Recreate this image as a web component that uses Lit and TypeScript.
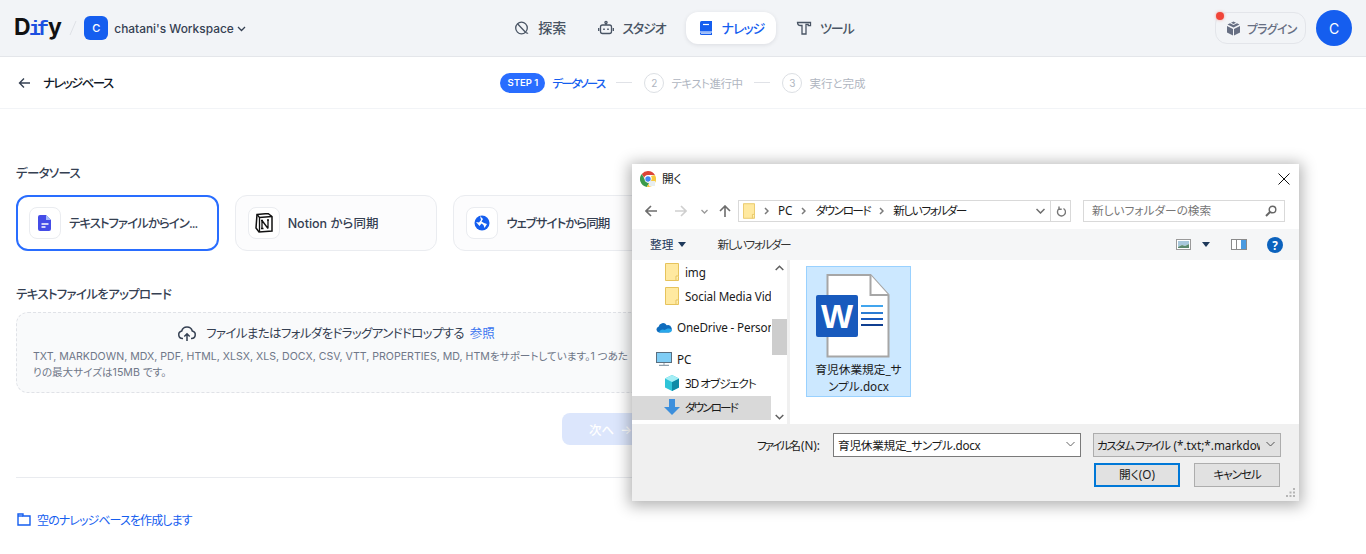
import { LitElement, html, css, svg } from 'lit';
import { customElement } from 'lit/decorators.js';

const folderIcon = (w = 14, h = 18) => html`<svg width=${w} height=${h} viewBox="0 0 14 18">
  <path d="M.5.5h13v17H.5z" fill="#ffe9a0" stroke="#e6c35c"/>
  <path d="M11 17.5V13h2.5" fill="#fff3c4" stroke="#e6c35c"/>
</svg>`;

const chev = svg`<path d="M1 1l3 3-3 3" fill="none" stroke="#7a7a7a" stroke-width="1.5"/>`;

@customElement('file-dialog')
export class FileDialog extends LitElement {
    static styles = css`
        :host {
            display: block;
            position: absolute;
            left: 632px;
            top: 164px;
            width: 667px;
            height: 337px;
            background: #fff;
            box-shadow: 0 2px 14px 3px rgba(0, 0, 0, .3);
            font: 11.7px "Noto Sans", "Noto Sans CJK JP", sans-serif;
            font-feature-settings: "palt";
            color: #1a1a1a;
            display: grid;
            grid-template-rows: 29px 36px 31px 164px 77px;
            overflow: hidden;
        }
        svg { display: block; flex: none; }
        .title { display: flex; align-items: center; padding: 0 9px 0 8px; gap: 6px; }
        .title span { padding-bottom: 3px; }
        .title .x { margin-left: auto; margin-right: 0; }
        .nav { display: flex; align-items: center; padding-left: 13px; }
        .address {
            margin-left: 7px;
            width: 333px;
            height: 22px;
            box-sizing: border-box;
            border: 1px solid #d9d9d9;
            display: flex;
            align-items: center;
            padding-left: 4px;
        }
        .address .crumb { margin-left: 9px; white-space: nowrap; padding-bottom: 3px; letter-spacing: -1.5px; }
        .address .crumb.pc { letter-spacing: 0; }
        .address svg.sep { margin-left: 9px; }
        .address .end {
            margin-left: auto;
            display: flex;
            align-items: center;
            height: 100%;
        }
        .address .drop { width: 19px; display: flex; justify-content: center; }
        .address .refresh {
            width: 19px;
            height: 100%;
            border-left: 1px solid #d9d9d9;
            display: flex;
            align-items: center;
            justify-content: center;
        }
        .search {
            margin-left: 12px;
            width: 202px;
            height: 22px;
            box-sizing: border-box;
            border: 1px solid #d9d9d9;
            display: flex;
            align-items: center;
            justify-content: space-between;
            padding: 0 7px 0 8px;
            color: #777;
        }
        .search span { padding-bottom: 3px; }
        .toolbar {
            background: #f5f6f7;
            display: flex;
            align-items: center;
            padding-left: 18px;
            padding-right: 16px;
            color: #1e395b;
        }
        .toolbar .org { padding-bottom: 3px; }
        .toolbar .newf { margin-left: 31px; color: #333; padding-bottom: 3px; letter-spacing: -1.5px; }
        .caret {
            width: 0;
            height: 0;
            border: 4px solid transparent;
            border-top: 5px solid #1e395b;
            border-bottom: 0;
            margin-left: 5px;
        }
        .toolbar .right { margin-left: auto; display: flex; align-items: center; }
        .help { margin-left: -16px; width: 16px; text-align: center; color: #fff; font-weight: 700; line-height: 16px; }
        .body { display: flex; }
        .tree { width: 139px; overflow: hidden; }
        .row { height: 24px; box-sizing: border-box; display: flex; align-items: center; white-space: nowrap; gap: 6px; overflow: hidden; letter-spacing: -.15px; }
        .row.l1 { padding-left: 33px; }
        .row.l2 { padding-left: 32px; gap: 5px; }
        .row.l0 { padding-left: 24px; gap: 5px; margin-top: 8px; padding-bottom: 2px; }
        .row.plain { margin-top: 0; padding-bottom: 3px; padding-left: 32px; }
        .row.sel { background: #d9d9d9; padding-bottom: 3px; }
        .row .kana { letter-spacing: -1px; }
        .row.sel .kana { letter-spacing: -2px; }
        .scroll {
            width: 15px;
            margin-left: 1px;
            display: grid;
            grid-template-rows: 15px 44px 36px 1fr 15px;
            justify-items: center;
            align-items: center;
            border-right: 3px solid #f0f0f0;
            box-sizing: content-box;
        }
        .thumb { background: #cdcdcd; width: 100%; height: 100%; grid-row: 3; }
        .files { padding: 6px 0 0 16px; }
        .tile {
            width: 105px;
            height: 131px;
            box-sizing: border-box;
            background: #cce8ff;
            border: 1px solid #99d1ff;
            display: flex;
            flex-direction: column;
            align-items: center;
            padding-top: 7px;
        }
        .tile svg { margin-right: 12px; }
        .tile .name { margin-top: 3px; text-align: center; line-height: 17px; }
        .word-letter { font: 700 34px "Liberation Sans", sans-serif; fill: #fff; }
        .bottom {
            background: #f0f0f0;
            display: grid;
            grid-template-columns: 1fr 248px 188px;
            grid-template-rows: 24px 24px;
            column-gap: 12px;
            row-gap: 6px;
            padding: 9px 18px 0 0;
            align-items: center;
            position: relative;
        }
        .bottom label { justify-self: end; margin-right: 1px; padding-bottom: 2px; }
        .bottom label span { letter-spacing: -2px; margin-right: 2px; }
        .input {
            height: 24px;
            box-sizing: border-box;
            background: #fff;
            border: 1px solid #7a7a7a;
            display: flex;
            align-items: center;
            justify-content: space-between;
            padding: 0 5px 2px 4px;
            white-space: nowrap;
            letter-spacing: -.3px;
        }
        .select {
            height: 24px;
            box-sizing: border-box;
            background: #e1e1e1;
            border: 1px solid #adadad;
            display: flex;
            align-items: center;
            justify-content: space-between;
            padding: 0 5px 2px 3px;
            overflow: hidden;
            white-space: nowrap;
        }
        .select .val { width: 163px; overflow: hidden; }
        .select .val span { letter-spacing: -1.5px; margin-right: 4px; }
        .buttons {
            grid-column: 2 / 4;
            display: flex;
            justify-content: flex-end;
            gap: 14px;
            padding-right: 1px;
        }
        .btn {
            width: 86px;
            height: 24px;
            box-sizing: border-box;
            background: #e1e1e1;
            border: 1px solid #adadad;
            display: flex;
            align-items: center;
            justify-content: center;
            padding-bottom: 3px;
        }
        .btn.kana { letter-spacing: -1.2px; }
        .btn.primary { border: 2px solid #0078d7; }
        .grip { position: absolute; right: 3px; bottom: 3px; }
    `;

    chromeIcon() {
        return html`<svg width="16" height="16" viewBox="0 0 16 16">
          <path d="M8 0a8 8 0 0 1 6.93 4H8a4 4 0 0 0-3.8 2.8L1.8 2.9A8 8 0 0 1 8 0z" fill="#db4437"/>
          <path d="M1.8 2.9l3.4 6.1A4 4 0 0 0 9.2 11.8L6.8 15.9A8 8 0 0 1 1.8 2.9z" fill="#3a9a4c"/>
          <path d="M14.93 4A8 8 0 0 1 6.8 15.9l3.5-6A4 4 0 0 0 11 5z" fill="#f7c93e"/>
          <circle cx="8" cy="8" r="3.4" fill="#fff"/>
          <circle cx="8" cy="8" r="2.7" fill="#4285f4"/>
          <path d="M9 10h6v5H9z" fill="#e8eef0"/>
        </svg>`;
    }

    wordIcon() {
        return html`<svg width="74" height="84" viewBox="0 0 74 84">
          <path d="M11.5 1h43l18 20v61.500h-61z" fill="#fff" stroke="#a6a6a6" stroke-width="2"/>
          <path d="M54.500 1v20h18" fill="#fff" stroke="#a6a6a6" stroke-width="2"/>
          <rect x="0" y="21" width="42" height="42" rx="2" fill="#185abd"/>
          <text class="word-letter" x="21" y="54" text-anchor="middle">W</text>
          <path d="M45 32h22" stroke="#41a5ee" stroke-width="2"/>
          <path d="M45 39h22" stroke="#2b7cd3" stroke-width="2"/>
          <path d="M45 45h22" stroke="#185abd" stroke-width="2"/>
          <path d="M45 51h22" stroke="#103f91" stroke-width="2"/>
        </svg>`;
    }

    render() {
        return html`
          <div class="title">
            ${this.chromeIcon()}
            <span>開く</span>
            <svg class="x" width="12" height="12" viewBox="0 0 12 12"><path d="M.5.5l11 11M11.500.5l-11 11" stroke="#111" fill="none"/></svg>
          </div>
          <div class="nav">
            <svg width="12" height="12" viewBox="0 0 12 12"><path d="M12 6H1.500M6 1L1 6l5 5" fill="none" stroke="#6d6d6d" stroke-width="1.600"/></svg>
            <svg style="margin-left:18px" width="12" height="12" viewBox="0 0 12 12"><path d="M0 6h10.500M6 1l5 5-5 5" fill="none" stroke="#cfcfcf" stroke-width="1.600"/></svg>
            <svg style="margin-left:14px" width="7" height="5" viewBox="0 0 7 5"><path d="M.5 1l3 3 3-3" fill="none" stroke="#999" stroke-width="1.300"/></svg>
            <svg style="margin-left:11px" width="12" height="12" viewBox="0 0 12 12"><path d="M6 12V1.500M1 6l5-5 5 5" fill="none" stroke="#6d6d6d" stroke-width="1.600"/></svg>
            <div class="address">
              ${folderIcon(12, 16)}
              <svg class="sep" width="5" height="8" viewBox="0 0 5 8">${chev}</svg>
              <span class="crumb pc">PC</span>
              <svg class="sep" width="5" height="8" viewBox="0 0 5 8">${chev}</svg>
              <span class="crumb">ダウンロード</span>
              <svg class="sep" width="5" height="8" viewBox="0 0 5 8">${chev}</svg>
              <span class="crumb">新しいフォルダー</span>
              <div class="end">
                <div class="drop"><svg width="9" height="6" viewBox="0 0 9 6"><path d="M.5 1l4 4 4-4" fill="none" stroke="#6d6d6d" stroke-width="1.500"/></svg></div>
                <div class="refresh"><svg width="10" height="11" viewBox="0 0 10 11"><path d="M2.500 2.500A4 4 0 1 0 7 2.800M7 .5v2.800H4.300" fill="none" stroke="#777" stroke-width="1.400" transform="scale(-1 1) translate(-10 0)"/></svg></div>
              </div>
            </div>
            <div class="search">
              <span>新しいフォルダーの検索</span>
              <svg width="12" height="12" viewBox="0 0 12 12"><circle cx="7.500" cy="4.500" r="3.300" fill="none" stroke="#666" stroke-width="1.400"/><path d="M5 7l-4 4" stroke="#666" stroke-width="2"/></svg>
            </div>
          </div>
          <div class="toolbar">
            <span class="org">整理</span><i class="caret"></i>
            <span class="newf">新しいフォルダー</span>
            <div class="right">
              <svg width="15" height="11" viewBox="0 0 15 11"><rect x=".5" y=".5" width="14" height="10" fill="#fff" stroke="#9a9a9a"/><path d="M2 2h11v3l-4 2-3-1-4 2z" fill="#a8c8dc"/><path d="M2 8l4-2 3 1 4-2v4H2z" fill="#5c8a6e"/></svg>
              <i class="caret" style="margin-left:11px"></i>
              <svg style="margin-left:21px" width="16" height="11" viewBox="0 0 16 11"><rect x=".5" y=".5" width="15" height="10" fill="#fff" stroke="#8a8a8a"/><rect x="10" y="1" width="5" height="9" fill="#4a9ae0"/><path d="M5.500 1v9" stroke="#8a8a8a"/></svg>
              <svg style="margin-left:20px" width="16" height="16" viewBox="0 0 16 16"><circle cx="8" cy="8" r="8" fill="#0b62bd"/></svg>
              <span class="help">?</span>
            </div>
          </div>
          <div class="body">
            <div class="tree">
              <div class="row l1">${folderIcon()}<span>img</span></div>
              <div class="row l1">${folderIcon()}<span>Social Media Vid</span></div>
              <div class="row l0">
                <svg width="16" height="11" viewBox="0 0 16 11"><path d="M3 10.500a3 3 0 0 1-.5-5.800 4.500 4.500 0 0 1 8.200-1.500A3.500 3.500 0 0 1 13 10.500z" fill="#0f6cbd"/><path d="M3 10.500h10a3 3 0 0 0 3-2.500c-2-2-5-2-7 0-2-1-5-1-6 2.500z" fill="#28a8ea"/></svg>
                <span>OneDrive - Person</span>
              </div>
              <div class="row l0">
                <svg width="16" height="14" viewBox="0 0 16 14"><rect x=".5" y=".5" width="15" height="10" fill="#7fcdf5" stroke="#5a6f80"/><path d="M3 13.500h10" stroke="#8fa0ad" stroke-width="1.500"/><path d="M8 11v2" stroke="#8fa0ad"/></svg>
                <span>PC</span>
              </div>
              <div class="row l0 plain">
                <svg width="16" height="16" viewBox="0 0 16 16"><path d="M8 0l7 3.500v9L8 16l-7-3.500v-9z" fill="#2fc4d8"/><path d="M8 7l7-3.500v9L8 16z" fill="#0e8aa6"/><path d="M8 0l7 3.500L8 7 1 3.500z" fill="#a5eef5"/></svg>
                <span class="kana">3D オブジェクト</span>
              </div>
              <div class="row l2 sel">
                <svg width="16" height="16" viewBox="0 0 16 16"><path d="M5 0h6v8h5l-8 8-8-8h5z" fill="#3d8fdc"/></svg>
                <span class="kana">ダウンロード</span>
              </div>
            </div>
            <div class="scroll">
              <svg width="9" height="6" viewBox="0 0 9 6"><path d="M.7 5l3.800-3.800L8.300 5" fill="none" stroke="#606060" stroke-width="1.500"/></svg>
              <div class="thumb"></div>
              <svg style="grid-row:5" width="9" height="6" viewBox="0 0 9 6"><path d="M.7 1l3.800 3.800L8.300 1" fill="none" stroke="#606060" stroke-width="1.500"/></svg>
            </div>
            <div class="files">
              <div class="tile">
                ${this.wordIcon()}
                <div class="name">育児休業規定_サ<br>ンプル.docx</div>
              </div>
            </div>
          </div>
          <div class="bottom">
            <label><span>ファイル名</span>(N):</label>
            <div class="input"><span>育児休業規定_サンプル.docx</span>
              <svg width="9" height="6" viewBox="0 0 9 6"><path d="M.5 1l4 4 4-4" fill="none" stroke="#666"/></svg></div>
            <div class="select"><div class="val"><span>カスタム ファイル</span>(*.txt;*.markdown;*.mdx)</div>
              <svg width="9" height="6" viewBox="0 0 9 6"><path d="M.5 1l4 4 4-4" fill="none" stroke="#555"/></svg></div>
            <div></div>
            <div class="buttons">
              <div class="btn primary">開く(O)</div>
              <div class="btn kana">キャンセル</div>
            </div>
            <svg class="grip" width="10" height="10" viewBox="0 0 10 10" fill="#b5b5b5">
              <rect x="7" y="0" width="2" height="2"/><rect x="3.500" y="3.500" width="2" height="2"/><rect x="7" y="3.500" width="2" height="2"/>
              <rect x="0" y="7" width="2" height="2"/><rect x="3.500" y="7" width="2" height="2"/><rect x="7" y="7" width="2" height="2"/>
            </svg>
          </div>
        `;
    }
}

@customElement('app-root')
export class AppRoot extends LitElement {
    static styles = css`
        :host {
            display: block;
            position: relative;
            height: 554px;
            overflow: hidden;
            background: #fff;
            font-family: Inter, "Noto Sans CJK JP", sans-serif;
            font-feature-settings: "palt";
            color: #354052;
        }
        svg { display: block; flex: none; }
        header {
            height: 56px;
            box-sizing: content-box;
            background: #f2f4f7;
            border-bottom: 1px solid #e4e6ea;
            display: grid;
            grid-template-columns: 1fr auto 1fr;
            align-items: center;
            padding: 0 14px;
        }
        .left { display: flex; align-items: center; }
        .logo {
            font: 700 23px/1 Inter, sans-serif;
            color: #111;
            letter-spacing: -.6px;
            display: flex;
            align-items: baseline;
        }
        .logo b {
            font: 700 20px/1 "Liberation Mono", monospace;
            color: #1c4fe0;
            letter-spacing: -4px;
            margin: 0 3px 0 -1px;
        }
        .slash { margin: 0 7px 0 8px; }
        .ws-badge {
            flex: none;
            width: 24px;
            height: 24px;
            border-radius: 6px;
            background: #155eef;
            color: #fff;
            font-size: 11px;
            font-weight: 500;
            display: flex;
            align-items: center;
            justify-content: center;
        }
        .ws-name { margin-left: 6px; font-size: 11.900px; font-weight: 500; white-space: nowrap; }
        .nav { display: flex; gap: 8px; padding-left: 2px; }
        .nav-item {
            height: 32px;
            padding: 0 12px 2px;
            box-sizing: border-box;
            display: flex;
            align-items: center;
            gap: 8px;
            border-radius: 12px;
            font-size: 14px;
            font-weight: 500;
            color: #495464;
            white-space: nowrap;
        }
        .nav-item svg { margin-top: 2px; }
        .nav-item .kana { font-size: 13px; letter-spacing: -1.100px; }
        .nav-item.active {
            background: #fff;
            color: #155eef;
            box-shadow: 0 1px 4px rgba(16, 24, 40, .1);
        }
        .right { display: flex; justify-content: flex-end; align-items: center; gap: 10px; }
        .plugin {
            position: relative;
            width: 91px;
            height: 32px;
            box-sizing: border-box;
            border: 1px solid #e3e5ea;
            border-radius: 12px;
            display: flex;
            align-items: center;
            gap: 6px;
            padding-left: 10px;
            font-size: 12px;
            font-weight: 500;
            color: #676f83;
            white-space: nowrap;
            letter-spacing: -.8px;
        }
        .dot {
            position: absolute;
            left: 0;
            top: -1px;
            width: 8px;
            height: 8px;
            border-radius: 50%;
            background: #f04438;
            box-shadow: 0 0 3px rgba(240, 68, 56, .5);
        }
        .avatar {
            flex: none;
            width: 36px;
            height: 36px;
            border-radius: 50%;
            background: #155eef;
            color: #fff;
            font-size: 14px;
            display: flex;
            align-items: center;
            justify-content: center;
        }
        .stepbar {
            height: 51px;
            border-bottom: 1px solid #f2f4f7;
            display: grid;
            grid-template-columns: 1fr auto 1fr;
            align-items: center;
            padding: 0 18px;
        }
        .back { display: flex; align-items: center; gap: 13px; font-size: 12.500px; font-weight: 500; color: #101828; white-space: nowrap; letter-spacing: -1.600px; }
        .steps { display: flex; align-items: center; font-size: 11.500px; color: #b0b6c1; white-space: nowrap; }
        .pill {
            height: 20px;
            width: 45px;
            border-radius: 10px;
            background: #296dff;
            color: #fff;
            font-size: 9.500px;
            font-weight: 600;
            display: flex;
            align-items: center;
            justify-content: center;
            margin-right: 7px;
        }
        .steps .cur { color: #155eef; font-weight: 500; letter-spacing: -1.800px; }
        .steps .txt { letter-spacing: -.5px; }
        .line { width: 16px; height: 1px; background: #e0e2e7; margin: 0 12px; }
        .num {
            width: 18px;
            height: 18px;
            border: 1px solid #dcdfe4;
            border-radius: 50%;
            font-size: 10px;
            display: flex;
            align-items: center;
            justify-content: center;
            margin-right: 7px;
        }
        main { width: 640px; padding: 55px 0 0 16px; }
        .label { font-size: 12.500px; font-weight: 500; height: 20px; line-height: 20px; color: #354052; white-space: nowrap; letter-spacing: -.7px; }
        .cards { display: flex; gap: 16px; margin-top: 11px; width: 640px; }
        .card {
            flex: none;
            width: 202.670px;
            height: 56px;
            box-sizing: border-box;
            border: 1px solid #eaecf0;
            border-radius: 12px;
            background: #fcfcfd;
            display: flex;
            align-items: center;
            gap: 8px;
            padding: 0 0 2px 12px;
            font-size: 12.500px;
            font-weight: 500;
            color: #354052;
            white-space: nowrap;
        }
        .card .ico { margin-top: 2px; }
        .card.on { border: 2px solid #296dff; background: #fff; padding-left: 11px; }
        .card .kana { letter-spacing: -1px; }
        .ico {
            flex: none;
            width: 32px;
            height: 32px;
            box-sizing: border-box;
            border: 1px solid #eaecf0;
            border-radius: 8px;
            background: #fff;
            display: flex;
            align-items: center;
            justify-content: center;
        }
        .mt { margin-top: 34px; }
        .upload {
            margin-top: 7px;
            width: 640px;
            height: 81px;
            box-sizing: border-box;
            border: 1px dashed #e0e2e7;
            border-radius: 12px;
            background: #f9fafb;
            padding: 8px 16px 0;
        }
        .drop {
            display: flex;
            align-items: center;
            justify-content: center;
            gap: 9px;
            font-size: 12.500px;
            color: #354052;
            height: 24px;
            white-space: nowrap;
        }
        .drop span { letter-spacing: -.65px; padding-bottom: 2px; }
        .drop a { color: #155eef; opacity: .85; letter-spacing: 0; margin-left: 3px; }
        .hint { font-size: 10.600px; line-height: 16px; margin-top: 4px; color: #6f7788; white-space: nowrap; }
        .next-wrap { display: flex; justify-content: flex-end; margin-top: 20px; }
        .next {
            width: 94px;
            height: 32px;
            border-radius: 8px;
            background: #dce6fc;
            color: #fff;
            font-size: 12.500px;
            font-weight: 500;
            display: flex;
            align-items: center;
            gap: 6px;
            padding-left: 27px;
            box-sizing: border-box;
        }
        .rule { height: 1px; background: #e9ebef; margin-top: 32px; }
        .link {
            margin-top: 33px;
            display: flex;
            align-items: center;
            gap: 6px;
            padding-left: 1px;
            font-size: 12px;
            color: #155eef;
            white-space: nowrap;
            letter-spacing: -.9px;
        }
    `;

    render() {
        return html`
          <header>
            <div class="left">
              <div class="logo">D<b>if</b>y</div>
              <svg class="slash" width="8" height="14" viewBox="0 0 8 14"><path d="M7 0L1 14" stroke="#dfe1e6"/></svg>
              <div class="ws-badge">C</div>
              <div class="ws-name">chatani's Workspace</div>
              <svg style="margin-left:3px;margin-top:1px" width="9" height="6" viewBox="0 0 9 6"><path d="M1 1l3.500 3.500L8 1" fill="none" stroke="#354052" stroke-width="1.300"/></svg>
            </div>
            <nav class="nav">
              <div class="nav-item">
                <svg width="16" height="16" viewBox="2 2 16 16" fill="none" stroke="#495464" stroke-width="1.300"><circle cx="9.500" cy="10" r="5.800"/><path d="M5.500 5.800l8 8.400M13.500 14.200c1 .8 2 1.200 2.500.8"/></svg>
                <span>探索</span>
              </div>
              <div class="nav-item">
                <svg width="16" height="16" viewBox="2 2 16 16" fill="none" stroke="#495464" stroke-width="1.300"><rect x="4.500" y="7" width="11" height="8.500" rx="2"/><circle cx="10" cy="4.500" r="1.100"/><path d="M10 5.500V7M2.700 10v3M17.300 10v3"/><path d="M8 10.500v1.500M12 10.500v1.500" stroke-width="1.600"/></svg>
                <span class="kana">スタジオ</span>
              </div>
              <div class="nav-item active">
                <svg width="16" height="16" viewBox="0 0 16 16"><path d="M2 2.500A1.500 1.500 0 0 1 3.500 1H14v10.500H2z" fill="#155eef"/><path d="M2 12.500h12V15H3.500A1.500 1.500 0 0 1 2 13.500z" fill="#155eef"/><path d="M5 4.500h6" stroke="#fff" stroke-width="1.200"/><path d="M3 13.300h10" stroke="#fff" stroke-width=".8"/></svg>
                <span class="kana">ナレッジ</span>
              </div>
              <div class="nav-item">
                <svg width="16" height="16" viewBox="2 2 16 16" fill="none" stroke="#495464" stroke-width="1.300"><path d="M3.500 4.500h13v3.200h-2.300V6.300H12V16H8V7.500H6.500c-1.500 0-3-1-3-3z"/></svg>
                <span class="kana">ツール</span>
              </div>
            </nav>
            <div class="right">
              <div class="plugin">
                <i class="dot"></i>
                <svg width="15" height="15" viewBox="0 0 15 15" fill="#676f83"><path d="M7.500.5l2.500 1.200L7.500 3 5 1.700zM1.500 3.500L4 2.300l3.500 1.700L11 2.300l2.500 1.200-6 3z"/><path d="M1 5l6 3v6.500L1 11.500zM14 5l-6 3v6.500l6-3z"/></svg>
                プラグイン
              </div>
              <div class="avatar">C</div>
            </div>
          </header>
          <div class="stepbar">
            <div class="back">
              <svg width="12" height="12" viewBox="0 0 12 12"><path d="M12 6H1.500M6 1.500L1.500 6 6 10.500" fill="none" stroke="#354052" stroke-width="1.400"/></svg>
              ナレッジベース
            </div>
            <div class="steps">
              <div class="pill">STEP 1</div>
              <span class="cur">データソース</span>
              <i class="line"></i>
              <div class="num">2</div><span class="txt">テキスト進行中</span>
              <i class="line"></i>
              <div class="num">3</div><span>実行と完成</span>
            </div>
            <div></div>
          </div>
          <main>
            <div class="label">データソース</div>
            <div class="cards">
              <div class="card on">
                <div class="ico"><svg width="14" height="16" viewBox="0 0 14 16"><path d="M2 0h6l5 5v9a2 2 0 0 1-2 2H2a2 2 0 0 1-2-2V2a2 2 0 0 1 2-2z" fill="#444ce7"/><path d="M8 0v5h5z" fill="#a4bcfd"/><path d="M3.500 9h7M3.500 12h4" stroke="#fff" stroke-width="1.300"/></svg></div>
                <span class="kana">テキストファイルからイン...</span>
              </div>
              <div class="card">
                <div class="ico"><svg width="20" height="20" viewBox="0 0 20 20"><path d="M3 1.500l11-1 4 3v14.500l-13 1-3-4z" fill="#fff" stroke="#111" stroke-width="1.500"/><path d="M3 1.500l2.500 3 12.500-1M5.500 4.500v14.500" fill="none" stroke="#111" stroke-width="1.300"/><path d="M8 7.500v8M8 7.500l6 8M14 7v8.500M7 7.500h2M13 7h2M7 15.500h2.500" fill="none" stroke="#111" stroke-width="1.300"/></svg></div>
                <span>Notion から同期</span>
              </div>
              <div class="card">
                <div class="ico"><svg width="16" height="16" viewBox="0 0 16 16"><circle cx="8" cy="8" r="7.500" fill="#155eef"/><path d="M6 1l3 3-1.500 2.500L10 8l3 1-2.500 4-1-3-2-1.500L5.500 11 2 7l3 .5L7 5z" fill="#fff"/></svg></div>
                <span class="kana">ウェブサイトから同期</span>
              </div>
            </div>
            <div class="label mt">テキストファイルをアップロード</div>
            <div class="upload">
              <div class="drop">
                <svg width="20" height="20" viewBox="0 0 20 20" fill="none" stroke="#354052" stroke-width="1.500"><path d="M6 15.500H5.500a3.800 3.800 0 0 1-.8-7.500 5.500 5.500 0 0 1 10.600 0 3.800 3.800 0 0 1-.8 7.500H14"/><path d="M10 18v-7M7.300 13.500L10 10.800l2.700 2.700"/></svg>
                <span>ファイルまたはフォルダをドラッグアンドドロップする <a>参照</a></span>
              </div>
              <div class="hint">TXT, MARKDOWN, MDX, PDF, HTML, XLSX, XLS, DOCX, CSV, VTT, PROPERTIES, MD, HTMをサポートしています。1 つあた<br>りの最大サイズは15MB です。</div>
            </div>
            <div class="next-wrap">
              <div class="next">次へ <span>→</span></div>
            </div>
            <div class="rule"></div>
            <div class="link">
              <svg width="14" height="13" viewBox="0 0 14 13" fill="none" stroke="#155eef" stroke-width="1.400"><path d="M1 12V1h5v2h7v9z"/><path d="M1 3h5"/></svg>
              <span>空のナレッジベースを作成します</span>
            </div>
          </main>
          <file-dialog></file-dialog>
        `;
    }
}
